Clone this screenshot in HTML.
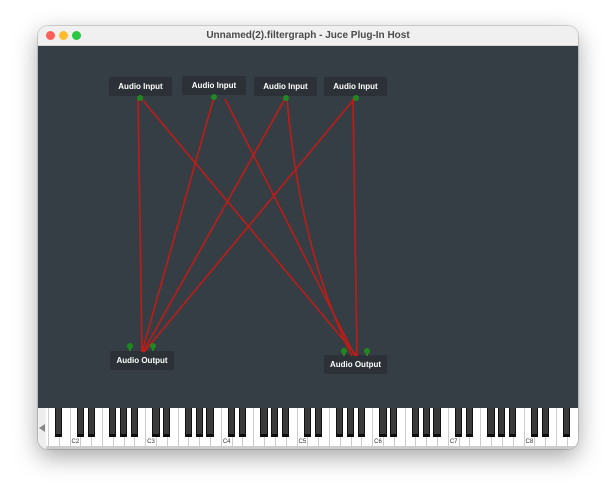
<!DOCTYPE html><html><head><style>
body{margin:0;width:616px;height:500px;background:#fff;position:relative;overflow:hidden;font-family:"Liberation Sans",sans-serif}
.win{position:absolute;left:38px;top:26px;width:540px;height:423px;border-radius:10px;overflow:hidden;box-shadow:0 8px 24px rgba(0,0,0,.35),0 0 0 1px rgba(0,0,0,.15)}
.tb{position:absolute;left:0;top:0;width:540px;height:19px;background:#f0f0f0;border-bottom:1px solid #d5d5d5;text-align:center;font-size:10px;font-weight:bold;color:#4a4a4a;line-height:19px}
.dot{position:absolute;top:5px;width:9px;height:9px;border-radius:50%}
.canvas{position:absolute;left:0;top:20px;width:540px;height:362px;background:#353d45}
.node{position:absolute;background:#2b3137;color:#fff;font-size:8px;font-weight:bold;text-align:center;line-height:19px;border-radius:2px}
.kb{position:absolute;left:0;top:382px;width:540px;height:41px;background:#fff}
</style></head><body>
<div class="win">
<div class="tb">Unnamed(2).filtergraph - Juce Plug-In Host
<div class="dot" style="left:8px;background:#fe5f57"></div><div class="dot" style="left:21px;background:#febc2e"></div><div class="dot" style="left:34px;background:#28c840"></div></div>
<div class="canvas"></div>
<div class="kb" id="kb"><div style="position:absolute;left:0;top:0;width:8px;height:41px;background:#eee"></div><div style="position:absolute;left:1px;top:16px;width:0;height:0;border-top:4px solid transparent;border-bottom:4px solid transparent;border-right:6px solid #888"></div></div>
</div>
<div class="node" style="left:109px;top:77px;width:63px">Audio Input</div>
<div class="node" style="left:182px;top:76px;width:64px">Audio Input</div>
<div class="node" style="left:254px;top:77px;width:63px">Audio Input</div>
<div class="node" style="left:324px;top:77px;width:63px">Audio Input</div>
<div class="node" style="left:110px;top:351px;width:64px">Audio Output</div>
<div class="node" style="left:324px;top:355px;width:63px">Audio Output</div>
<svg style="position:absolute;left:0;top:0" width="616" height="500">
<g stroke="#c01c16" stroke-width="1.6" fill="none">
<path d="M138 97 L142 352"/><path d="M140 97 L357 356"/>
<path d="M214 97 L142 352"/><path d="M225 99 L355 356"/>
<path d="M286 97 L143 352"/><path d="M287 99 Q300 250 352 356"/>
<path d="M355 98 L144 352"/><path d="M353 98 L357 356"/>
</g>
<g fill="#1e8a1e">
<circle cx="140" cy="98" r="3"/><circle cx="214" cy="97" r="3"/><circle cx="286" cy="98" r="3"/><circle cx="356" cy="98" r="3"/>
<circle cx="130" cy="346" r="3"/><circle cx="153" cy="346" r="3"/><circle cx="344" cy="351" r="3"/><circle cx="367" cy="351" r="3"/>
<rect x="129" y="346" width="2" height="5"/><rect x="152" y="346" width="2" height="5"/><rect x="343" y="351" width="2" height="5"/><rect x="366" y="351" width="2" height="5"/>
</g></svg>
<script>
var kb=document.getElementById('kb'),w=10.81,c2=69.5-38,h='';
for(var i=-3;i<50;i++){var x=c2+i*w;if(x<8||x>540)continue;
h+='<div style="position:absolute;left:'+x+'px;top:0;width:1px;height:41px;background:#ccc"></div>';
var n=((i%7)+7)%7;if(n==0){h+='<div style="position:absolute;left:'+(x+2)+'px;top:31px;font-size:6px;color:#333">C'+(2+Math.floor(i/7))+'</div>';}}
for(var i=-3;i<50;i++){var n=((i%7)+7)%7;if(n==2||n==6)continue;var x=c2+(i+1)*w-3.6;if(x<8||x>535)continue;
h+='<div style="position:absolute;left:'+x+'px;top:0;width:7.2px;height:29px;background:#3a3a3a;border:1px solid #111;border-top:none;border-bottom:3px solid #0e0e0e;box-sizing:border-box"></div>';}
h+='<div style="position:absolute;left:8px;top:38px;width:532px;height:3px;background:#ccc"></div>';
kb.innerHTML+=h;
</script>
</body></html>
